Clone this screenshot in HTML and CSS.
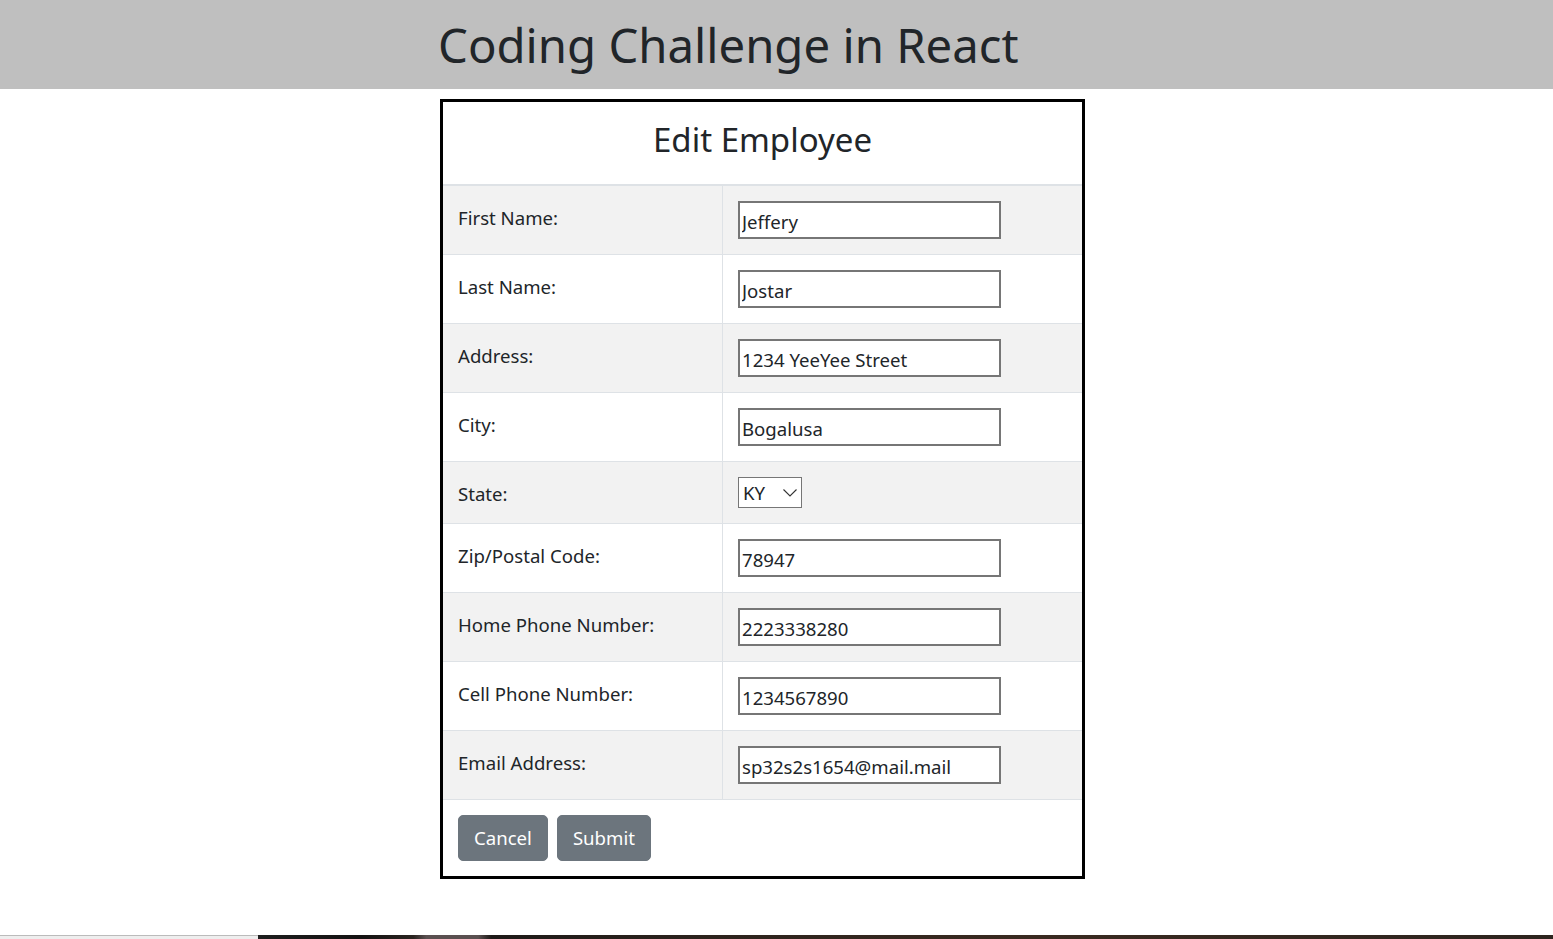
FILE: index.html
```html
<!DOCTYPE html>
<html lang="en">
<head>
<meta charset="utf-8">
<title>Coding Challenge in React</title>
<link rel="stylesheet" href="styles.css">
</head>
<body>
<div class="page">
  <header class="site-header">
    <h1 class="site-title">Coding Challenge in React</h1>
  </header>
  <main class="main">
    <div class="card">
      <table class="form-table">
        <thead>
          <tr><th colspan="2" class="card-title">Edit Employee</th></tr>
        </thead>
        <tbody>
          <tr class="odd"><td class="label">First Name:</td><td class="field"><input class="text-input" type="text" value="Jeffery"></td></tr>
          <tr><td class="label">Last Name:</td><td class="field"><input class="text-input" type="text" value="Jostar"></td></tr>
          <tr class="odd"><td class="label">Address:</td><td class="field"><input class="text-input" type="text" value="1234 YeeYee Street"></td></tr>
          <tr><td class="label">City:</td><td class="field"><input class="text-input" type="text" value="Bogalusa"></td></tr>
          <tr class="odd"><td class="label">State:</td><td class="field"><div class="select"><span class="select-value">KY</span><svg class="select-arrow" width="14" height="8" viewBox="0 0 14 8"><path d="M0.5 0.5 L7 7 L13.5 0.5" fill="none" stroke="#333" stroke-width="1.1"/></svg></div></td></tr>
          <tr><td class="label">Zip/Postal Code:</td><td class="field"><input class="text-input" type="text" value="78947"></td></tr>
          <tr class="odd"><td class="label">Home Phone Number:</td><td class="field"><input class="text-input" type="text" value="2223338280"></td></tr>
          <tr><td class="label">Cell Phone Number:</td><td class="field"><input class="text-input" type="text" value="1234567890"></td></tr>
          <tr class="odd"><td class="label">Email Address:</td><td class="field"><input class="text-input" type="text" value="sp32s2s1654@mail.mail"></td></tr>
          <tr class="actions-row"><td colspan="2" class="actions"><button class="btn">Cancel</button><button class="btn">Submit</button></td></tr>
        </tbody>
      </table>
    </div>
  </main>
  <div class="taskbar"><div class="tb-light"></div><div class="tb-dark"></div></div>
</div>
</body>
</html>
```
FILE: styles.css
```css
html, body {
  margin: 0;
  padding: 0;
  background: #fff;
}
body {
  font-family: "Noto Sans", "Open Sans", sans-serif;
  color: #212529;
}
.page {
  min-height: 939px;
  display: flex;
  flex-direction: column;
}
.site-header {
  background: #bfbfbf;
  height: 89px;
  box-sizing: border-box;
  padding-left: 438px;
  padding-top: 15px;
}
.site-title {
  margin: 0;
  font-size: 47.3px;
  font-weight: 400;
  line-height: 60px;
  color: #212529;
}
.main {
  flex: 1;
  padding-top: 10px;
  padding-left: 440px;
}
.card {
  width: 645px;
  box-sizing: border-box;
  border: 3px solid #000;
}
.form-table {
  width: 100%;
  border-collapse: collapse;
}
.card-title {
  font-size: 33px;
  font-weight: 400;
  text-align: center;
  height: 83px;
  padding: 0 0 8px 0;
  box-sizing: border-box;
  border-bottom: 2px solid #dee2e6;
  vertical-align: middle;
}
.form-table td {
  border-top: 1px solid #dee2e6;
  padding: 15px;
  vertical-align: top;
  font-size: 18.6px;
  line-height: 30px;
}
.form-table tbody tr:first-child td {
  border-top: none;
}
.odd td {
  background: #f2f2f2;
}
.form-table td.label {
  width: 249px;
  border-right: 1px solid #dee2e6;
  padding-top: 17px;
  padding-bottom: 13px;
}
.text-input {
  display: block;
  box-sizing: border-box;
  width: 263px;
  height: 38px;
  margin: 0;
  border: 2px solid #767676;
  padding: 3px 2px 0 2px;
  font-family: inherit;
  font-size: 18.6px;
  color: #212529;
  background: #fff;
}
.select {
  box-sizing: border-box;
  width: 64px;
  height: 31px;
  border: 1px solid #767676;
  background: #fff;
  display: flex;
  align-items: center;
  justify-content: space-between;
  padding: 0 4px 0 4px;
  font-size: 18.6px;
}
.select-arrow {
  display: block;
}
.form-table td.actions {
  padding: 15px;
}
.btn {
  font-family: inherit;
  font-size: 18.6px;
  line-height: 30px;
  color: #fff;
  background: #6c757d;
  border: 1px solid #6c757d;
  border-radius: 5px;
  padding: 7px 15px;
  margin-right: 9px;
}
.taskbar {
  height: 4px;
  display: flex;
}
.tb-light {
  width: 258px;
  background: #eeeeee;
  border-top: 1px solid #bbbbbb;
  box-sizing: border-box;
}
.tb-dark {
  flex: 1;
  background: linear-gradient(90deg, #1e1e1e 0%, #141212 8%, #2a2420 12%, #5a5050 13%, #5a5050 17%, #1e1a18 18%, #2d231d 35%, #3a2a20 60%, #2d241e 100%);
}
```
